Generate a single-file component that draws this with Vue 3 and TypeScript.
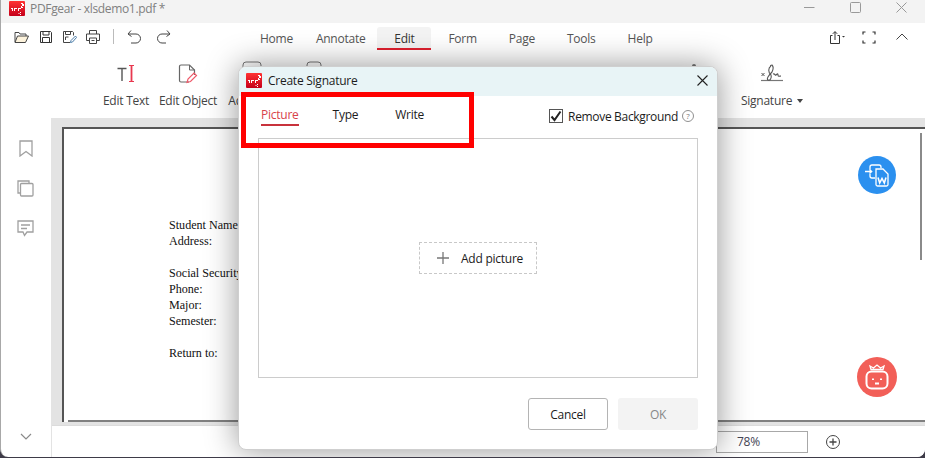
<script setup lang="ts">
const tabs = ['Home', 'Annotate', 'Edit', 'Form', 'Page', 'Tools', 'Help']
const pdfBlocks = [
  ['Student Name', 'Address:'],
  ['Social Security', 'Phone:', 'Major:', 'Semester:'],
  ['Return to:'],
]
const dialogTabs = ['Picture', 'Type', 'Write']
</script>

<template>
  <div class="window">
    <header class="titlebar">
      <svg class="logo" viewBox="0 0 16 16" width="16" height="16">
        <rect width="16" height="15" rx="1" fill="url(#lg1)" />
        <defs><linearGradient id="lg1" x1="0" y1="0" x2="0" y2="1"><stop offset="0" stop-color="#f33" /><stop offset="1" stop-color="#c5001a" /></linearGradient></defs>
        <path d="M2 7h2v3H3V8H2zM5 7h3v1H6v2H5zM9 7h3v1h-2v2H9zM12 2h2v1h1v2h-2v1h1v1h-2V5h1V3h-1zM9.500 12h1v1h-1zM11 11h1v1h-1zM11 13h1v1h-1z" fill="#fff" />
      </svg>
      <span class="title">PDFgear - xlsdemo1.pdf *</span>
      <div class="winctrls">
        <svg width="11" height="11" viewBox="0 0 11 11"><path d="M0 5.500h10.500" stroke="#999" /></svg>
        <svg width="11" height="11" viewBox="0 0 11 11"><rect x=".5" y=".5" width="10" height="10" rx="1" fill="none" stroke="#999" /></svg>
        <svg width="11" height="11" viewBox="0 0 11 11"><path d="M.5.500l10 10M10.500.500l-10 10" stroke="#999" /></svg>
      </div>
    </header>

    <div class="toolbar">
      <div class="quick">
        <svg class="open" width="15" height="14" viewBox="0 0 15 14" fill="none" stroke="#444"><path d="M1 12V2.500h4l1 1.500h6v2" /><path d="M1 12.500h10.500l3-6.500H3.500z" fill="#fdf3dc" stroke="#444" /></svg>
        <svg width="14" height="14" viewBox="0 0 14 14" fill="none" stroke="#333"><path d="M1.500 1.500h10l1 1v10h-11z" /><path d="M4 1.500v3.500h6v-3.500M3.500 12.500v-5h7v5" /></svg>
        <svg width="15" height="14" viewBox="0 0 15 14" fill="none" stroke="#444"><path d="M8 12.500H1.500v-11h9l1 1v3" /><path d="M3.500 1.500v3h5v-3M3.500 10V7h3" /><path d="M8.500 12.500l.5-2 4.500-4.500 1 1.500-4 4.500z" stroke="#4a7ca8" /></svg>
        <svg width="14" height="14" viewBox="0 0 14 14" fill="none" stroke="#444"><path d="M3.500 4V.500h7V4M3.500 10.500h-3V4h13v6.500h-3" /><path d="M3.500 8h7v5.500h-7zM5.500 10.500h3" /></svg>
        <span class="sep"></span>
        <svg width="14" height="14" viewBox="0 0 14 14" fill="none" stroke="#444"><path d="M4 .500L1 4l3.500 2.500M1.500 4H9a4 4 0 0 1 0 9H4" /></svg>
        <svg class="redo" width="14" height="14" viewBox="0 0 14 14" fill="none" stroke="#444"><path d="M10 .500L13 4 9.500 6.500M12.500 4H5a4 4 0 0 0 0 9h4" /></svg>
      </div>
      <nav class="tabs">
        <span v-for="t in tabs" :key="t" class="tab" :class="{ active: t === 'Edit' }">{{ t }}</span>
      </nav>
      <div class="rightctrls">
        <svg width="17" height="13" viewBox="0 0 17 13" fill="none" stroke="#333"><path d="M3.500 4.500h-2v8h9v-8h-2M6 9V.8M3.800 2.800L6 .6l2.200 2.200" /><path d="M13 5h3l-1.500 1.500z" fill="#333" stroke="none" /></svg>
        <svg width="14" height="13" viewBox="0 0 14 13" fill="none" stroke="#333" stroke-width="1.200"><path d="M1 3.500V1h2.500M10.500 1H13v2.500M13 9.500V12h-2.500M3.500 12H1V9.500" /></svg>
        <svg class="collapse" width="12" height="7" viewBox="0 0 12 7" fill="none" stroke="#444"><path d="M.5 6.500L6 1l5.500 5.500" /></svg>
      </div>
    </div>

    <div class="ribbon">
      <div class="rb" style="--w: 62px">
        <svg width="20" height="20" viewBox="0 0 20 20" fill="none"><path d="M1.500 4.500h9M6 4.500V17" stroke="#555" stroke-width="1.400" /><path d="M15.500 1.500v16" stroke="#e8384f" stroke-width="1.800" /><path d="M13 1.500h5M13 17.500h5" stroke="#e8384f" /></svg>
        <span>Edit Text</span>
      </div>
      <div class="rb" style="--w: 62px">
        <svg width="20" height="20" viewBox="0 0 20 20" fill="none"><path d="M11 18H3a1.500 1.500 0 0 1-1.500-1.500v-14A1.500 1.500 0 0 1 3 1h8.500l5 5v5" stroke="#666" stroke-width="1.200" /><path d="M11.500 1v5h5" stroke="#666" /><path d="M9 18.500l1-3.500 6-6 2.500 2.500-6 6z" stroke="#ef5a6a" stroke-width="1.200" /></svg>
        <span>Edit Object</span>
      </div>
      <div class="rb add" style="--w: 62px"><svg width="20" height="20" viewBox="0 0 20 20" fill="none"><rect x="1" y="1" width="18" height="18" rx="3" stroke="#777" /></svg><span>Add Text</span></div>
      <div class="rb hidden-tool" style="--w: 62px"><svg width="16" height="20" viewBox="0 0 16 20" fill="none"><rect x="1" y="1" width="14" height="18" rx="3" stroke="#777" /></svg></div>
      <span class="spacer"></span>
      <div class="rb hidden-tool last" style="--w: 62px"><svg width="8" height="8" viewBox="0 0 8 8"><circle cx="4" cy="4" r="2" fill="#777" /></svg></div>
      <div class="rb sig">
        <svg width="24" height="20" viewBox="0 0 24 20" fill="none"><path d="M1 17.500h22" stroke="#777" stroke-width="1.200" /><path d="M1.500 10l3 3M4.500 10l-3 3" stroke="#555" /><path d="M11 3c-3 2-3 6 0 9 1 3-1 6-3 5s1-5 4-8c1-2 2-5 0-7-1 0-2 1-1 1M13 11c2-1 2 2 3 1s2-2 2 0 2 1 3 1" stroke="#555" stroke-width="1.100" /></svg>
        <span>Signature <i class="caret"></i></span>
      </div>
    </div>

    <div class="body">
      <aside class="sidebar">
        <div class="side-icons">
          <svg width="14" height="17" viewBox="0 0 14 17" fill="none" stroke="#a0a0a0" stroke-width="1.300"><path d="M1 1h12v15l-6-4.500L1 16z" /></svg>
          <svg width="17" height="17" viewBox="0 0 17 17" fill="none" stroke="#a0a0a0" stroke-width="1.300"><path d="M3 13H1V1h11v2" /><rect x="3.500" y="3.500" width="12.500" height="12.500" rx="1" /></svg>
          <svg width="17" height="17" viewBox="0 0 17 17" fill="none" stroke="#a0a0a0" stroke-width="1.300"><path d="M1 1h15v11h-6l-2.500 3.500L6 12H1z" /><path d="M4 5h9M4 8.500h6" /></svg>
        </div>
        <svg class="side-chev" width="12" height="7" viewBox="0 0 12 7" fill="none" stroke="#8a8a8a" stroke-width="1.200"><path d="M1 1l5 5 5-5" /></svg>
      </aside>

      <div class="main">
        <div class="viewer">
          <div class="page">
            <div class="pdf">
              <div v-for="(b, i) in pdfBlocks" :key="i" class="pdf-block">
                <div v-for="l in b" :key="l">{{ l }}</div>
              </div>
            </div>
            <div class="page-bottom"></div>
          </div>
          <div class="scrollthumb"></div>
          <button class="fab blue">
            <svg width="26" height="26" viewBox="0 0 26 26" fill="none" stroke="#fff" stroke-width="1.300">
              <path d="M6 8V5A2 2 0 0 1 8 3h7a2 2 0 0 1 2 2v1M1 9.500h6.500M5.500 7.500l2.200 2-2.200 2M6 12v2a2 2 0 0 0 2 2h3" />
              <path d="M12 7h7l5 5v10.500a1.500 1.500 0 0 1-1.500 1.500h-9a1.500 1.500 0 0 1-1.500-1.500z" fill="#2b90ef" />
              <path d="M14 15.500l1.700 5.500 2.300-4.500 2.300 4.500 1.700-5.500" stroke-width="1.600" />
            </svg>
          </button>
          <button class="fab red">
            <svg width="26" height="26" viewBox="0 0 26 26" fill="none" stroke="#fff" stroke-width="2">
              <rect x="2.500" y="7.500" width="21" height="17" rx="5" />
              <path d="M7 5.500L6 2l3.500 2L13 1l3.500 3L20 2l-1 3.500z" stroke-width="1.300" />
              <path d="M9 14.500v1.500M17 14.500v1.500M11 19.500h4" />
            </svg>
          </button>
        </div>
        <footer class="status">
          <div class="zoombox">78%</div>
          <svg width="14" height="14" viewBox="0 0 14 14" fill="none" stroke="#444"><circle cx="7" cy="7" r="6.500" /><path d="M3.500 7h7M7 3.500v7" stroke-width="1.300" /></svg>
        </footer>
      </div>
    </div>

    <section class="dialog">
      <header class="dlg-head">
        <svg class="logo" viewBox="0 0 16 16" width="16" height="16">
          <rect width="16" height="15" rx="1" fill="url(#lg2)" />
          <defs><linearGradient id="lg2" x1="0" y1="0" x2="0" y2="1"><stop offset="0" stop-color="#f33" /><stop offset="1" stop-color="#c5001a" /></linearGradient></defs>
          <path d="M2 7h2v3H3V8H2zM5 7h3v1H6v2H5zM9 7h3v1h-2v2H9zM12 2h2v1h1v2h-2v1h1v1h-2V5h1V3h-1zM9.500 12h1v1h-1zM11 11h1v1h-1zM11 13h1v1h-1z" fill="#fff" />
        </svg>
        <span class="dlg-title">Create Signature</span>
        <svg class="dlg-close" width="11" height="11" viewBox="0 0 11 11"><path d="M.5.500l10 10M10.500.500l-10 10" stroke="#222" stroke-width="1.100" /></svg>
      </header>
      <div class="dlg-row">
        <div class="dlg-tabs">
          <span v-for="t in dialogTabs" :key="t" class="dlg-tab" :class="{ on: t === 'Picture' }">{{ t }}</span>
        </div>
        <label class="remove">
          <span class="check">
            <svg width="12" height="12" viewBox="0 0 12 12" fill="none" stroke="#222" stroke-width="2"><path d="M1.500 6.500l3 3.500L10.500 1.500" /></svg>
          </span>
          Remove Background
          <span class="help">?</span>
        </label>
      </div>
      <div class="drop">
        <div class="addpic">
          <svg width="12" height="12" viewBox="0 0 12 12" stroke="#777" stroke-width="1.300"><path d="M0 6h12M6 0v12" /></svg>
          <span>Add picture</span>
        </div>
      </div>
      <div class="dlg-foot">
        <button class="btn cancel">Cancel</button>
        <button class="btn ok">OK</button>
      </div>
    </section>

    <div class="annot"></div>
  </div>
</template>

<style>
html, body { margin: 0; background: #3e3b48; overflow: hidden; }
</style>

<style scoped>
.window {
  position: relative;
  width: 925px;
  height: 457px;
  display: flex;
  flex-direction: column;
  overflow: hidden;
  background: #fff;
  border-left: 1px solid #a8a8a8;
  box-sizing: border-box;
  border-radius: 0 0 8px 8px;
  font-family: "Open Sans", "Noto Sans", sans-serif;
  font-size: 12px;
  letter-spacing: -0.25px;
  color: #333;
}
.titlebar {
  height: 23px;
  flex: none;
  display: flex;
  align-items: flex-start;
  background: #f3f3f3;
  padding: 1px 0 0 8px;
  box-sizing: border-box;
}
.logo { flex: none; }
.title { margin-left: 5px; font-size: 12px; letter-spacing: -0.33px; color: #808080; line-height: 16px; }
.winctrls { margin-left: auto; margin-right: 18px; margin-top: 1px; display: flex; gap: 35px; }
.toolbar { height: 27px; flex: none; display: flex; align-items: center; position: relative; }
.quick { display: flex; align-items: center; gap: 9px; margin-left: 13px; width: 234px; flex: none; }
.open { margin-right: 1px; }
.sep { width: 1px; height: 15px; background: #bbb; margin: 0 4px; }
.redo { margin-left: 7px; }
.tabs { display: flex; align-items: center; height: 23px; margin-top: 3px; }
.tab { padding: 0 12px; line-height: 23px; color: #555; box-sizing: border-box; height: 23px; }
.tab:nth-child(2) { padding: 0 12px 0 11px; }
.tab:nth-child(4) { margin-left: 5px; margin-right: 8px; }
.tab:nth-child(5) { margin-right: 8px; }
.tab:nth-child(6) { margin-right: 8px; }
.tab.active {
  width: 54px;
  text-align: center;
  padding: 0;
  color: #333;
  background: #f3f3f3;
  border-bottom: 2px solid #e01f2e;
  border-radius: 3px 3px 0 0;
}
.rightctrls { margin-left: auto; margin-right: 17px; margin-top: 2px; display: flex; align-items: center; gap: 16px; }
.collapse { margin-left: 4px; margin-top: -2px; }
.ribbon { height: 68px; flex: none; display: flex; padding-left: 94px; box-sizing: border-box; }
.rb { width: var(--w); display: flex; flex-direction: column; align-items: center; padding-top: 14px; white-space: nowrap; color: #444; }
.rb span { margin-top: 9px; line-height: 16px; }
.add { margin-left: 2px; padding-top: 11px; }
.add span { margin-top: 12px; }
.hidden-tool { padding-top: 11px; }
.last { margin-right: 15px; padding-top: 12px; }
.spacer { flex: 1; }
.sig { width: 64px; margin-right: 121px; padding-top: 13px; }
.sig span { margin-top: 10px; }
.sig svg { flex: none; }
.caret { display: inline-block; width: 0; height: 0; border: 3.500px solid transparent; border-top: 4px solid #444; border-bottom: 0; margin-left: 2px; vertical-align: 2px; }
.body { flex: 1; min-height: 0; display: flex; }
.sidebar {
  width: 51px;
  flex: none;
  border-right: 1px solid #e3e3e3;
  box-sizing: border-box;
  display: flex;
  flex-direction: column;
  align-items: center;
  padding-top: 22px;
  padding-right: 1px;
}
.side-icons { display: flex; flex-direction: column; align-items: center; gap: 23px; }
.side-chev { margin-top: auto; margin-bottom: 17px; }
.main { flex: 1; min-width: 0; display: flex; flex-direction: column; }
.viewer {
  flex: 1;
  min-height: 0;
  position: relative;
  background: #e3e3e3;
  padding: 9px 0 3px 10px;
  display: flex;
  overflow: hidden;
}
.page {
  flex: 1;
  position: relative;
  background: #fff;
  border-left: 2px solid #555;
  border-top: 2px solid #555;
  box-sizing: border-box;
}
.pdf {
  padding: 88px 0 0 105px;
  font-family: "Liberation Serif", serif;
  font-size: 12.100px;
  letter-spacing: 0;
  line-height: 16px;
  color: #111;
}
.pdf-block { margin-bottom: 16px; }
.page-bottom { position: absolute; left: 4px; right: 0; bottom: 0; height: 2px; background: #808080; }
.scrollthumb { position: absolute; right: 3px; top: 15px; width: 2px; height: 127px; background: #8a8a8a; }
.fab {
  position: absolute;
  padding: 0;
  border: 0;
  border-radius: 50%;
  display: flex;
  align-items: center;
  justify-content: center;
}
.blue { width: 38px; height: 38px; background: #2b90ef; left: 806px; top: 38px; }
.red { width: 40px; height: 40px; background: #f25f58; left: 805px; top: 239px; }
.status {
  height: 32px;
  flex: none;
  border-top: 1px solid #dcdcdc;
  box-sizing: border-box;
  background: #fff;
  display: flex;
  align-items: center;
  padding-left: 664px;
  gap: 18px;
}
.zoombox {
  width: 92px;
  height: 22px;
  border: 1px solid #a8a8a8;
  box-sizing: border-box;
  line-height: 20px;
  padding-left: 20px;
  color: #445;
}
.dialog {
  position: absolute;
  left: 237px;
  top: 66px;
  width: 480px;
  height: 384px;
  background: #fff;
  border-radius: 8px;
  box-shadow: 0 0 32px rgba(0, 0, 0, 0.42);
  display: flex;
  flex-direction: column;
  overflow: hidden;
  border: 1px solid #cfcfcf;
  box-sizing: border-box;
  color: #1c1c1c;
}
.dlg-head {
  height: 29px;
  flex: none;
  box-sizing: border-box;
  background: #e8f4f6;
  display: flex;
  align-items: center;
  padding: 0 9px 2px 7px;
}
.dlg-title { margin-left: 6px; }
.dlg-close { margin-left: auto; }
.dlg-row { height: 42px; flex: none; box-sizing: border-box; display: flex; align-items: center; padding: 0 23px 2px 22px; }
.dlg-tabs { display: flex; }
.dlg-tab { line-height: 16px; padding-bottom: 1px; margin-right: 34px; border-bottom: 2px solid transparent; }
.dlg-tab:nth-child(2) { margin-right: 37px; }
.dlg-tab.on { color: #d8424a; border-bottom-color: #c8323c; }
.remove { margin-left: auto; display: flex; align-items: center; letter-spacing: -0.33px; }
.check {
  width: 14px;
  height: 14px;
  border: 1px solid #555;
  box-sizing: border-box;
  display: flex;
  align-items: center;
  justify-content: center;
  margin-right: 5px;
}
.help {
  width: 12px;
  height: 12px;
  border: 1.500px solid #909090;
  box-sizing: border-box;
  border-radius: 50%;
  font-size: 8px;
  line-height: 9px;
  text-align: center;
  color: #777;
  margin-left: 4px;
  letter-spacing: 0;
}
.drop {
  margin: 0 19px;
  height: 240px;
  flex: none;
  border: 1px solid #ccc;
  box-sizing: border-box;
  display: flex;
  align-items: center;
  justify-content: center;
}
.addpic {
  width: 118px;
  height: 32px;
  border: 1px dashed #c8c8c8;
  box-sizing: border-box;
  display: flex;
  align-items: center;
  padding-left: 17px;
  gap: 12px;
}
.dlg-foot { display: flex; justify-content: flex-end; gap: 10px; padding: 20px 19px 0 0; }
.btn {
  width: 80px;
  height: 32px;
  border-radius: 3px;
  font: inherit;
  letter-spacing: inherit;
  padding: 0;
}
.cancel { background: #fff; border: 1px solid #b4b4b4; color: #1c1c1c; }
.ok { background: #f3f3f3; border: 0; color: #888; }
.annot {
  position: absolute;
  left: 240px;
  top: 92px;
  width: 233px;
  height: 56px;
  border: 5px solid #ff0000;
  box-sizing: border-box;
}
</style>
